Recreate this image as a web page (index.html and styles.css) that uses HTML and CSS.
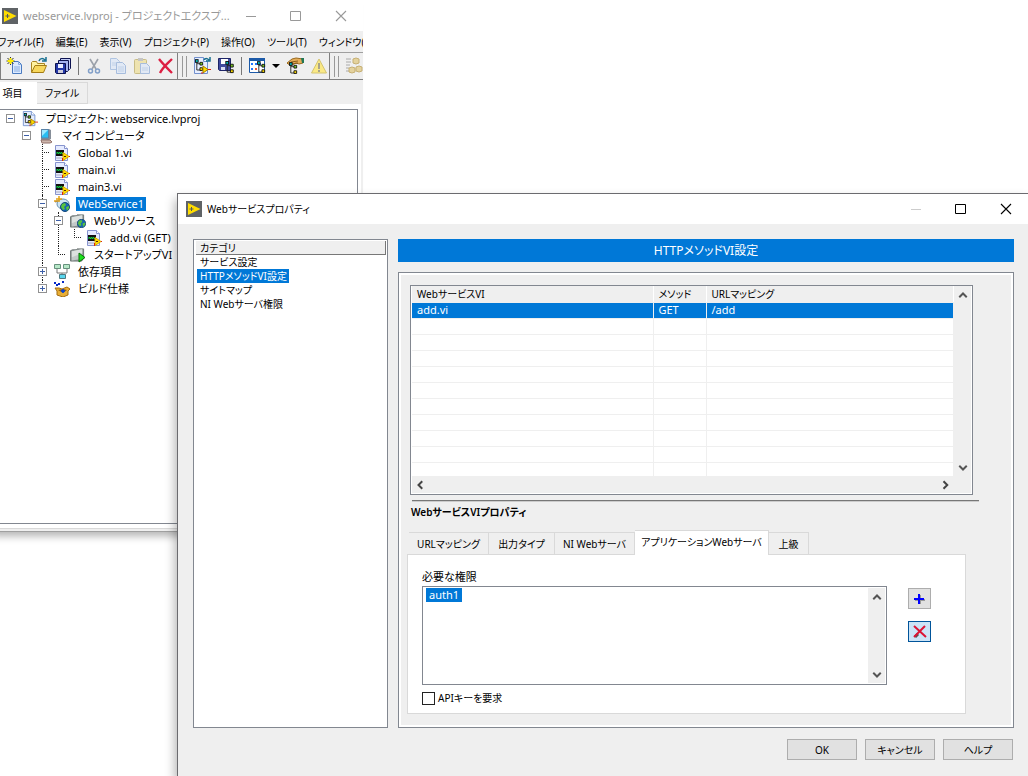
FILE: index.html
```html
<!DOCTYPE html>
<html lang="ja">
<head>
<meta charset="utf-8">
<title>Webサービスプロパティ</title>
<link rel="stylesheet" href="styles.css">
</head>
<body>
<svg class="defs" aria-hidden="true">
  <symbol id="i-app" viewBox="0 0 16 16"><rect width="16" height="16" fill="#5f6366"/><path d="M2 2L14.500 8L2 14Z" fill="#fd0"/><path d="M3.500 8h4M5.500 6v4" stroke="#54595c"/></symbol>
  <symbol id="i-new" viewBox="0 0 18 18"><path d="M6.500 4.500h6l3 3v9h-9z" fill="#dceaff" stroke="#4a7bc0"/><path d="M12.500 4.500v3h3M8 10h6M8 12h6M8 14h6" fill="none" stroke="#86acdf"/><path d="M4.500 0v8M.500 4h8M1.500 1l6 6M7.500 1l-6 6" stroke="#333"/><path d="M4.500 1v6M1.500 4h6" stroke="#fe0" stroke-width="2"/></symbol>
  <symbol id="i-open" viewBox="0 0 18 18"><path d="M1.500 15V5.500l1-1h4l1 2h7V9" fill="#fff3a0" stroke="#a98522"/><path d="M1.500 15.500L5 8.500h11.500l-3 7z" fill="#f6d75c" stroke="#a37c16"/><path d="M9 4c1-3 4-3 6-1M16 0v4h-4" fill="none" stroke="#176f90" stroke-width="1.500"/></symbol>
  <symbol id="i-saveall" viewBox="0 0 18 18"><path d="M6.500 1.500h10v10l-1 1h-9z" fill="#c3cdf6" stroke="#0c1250"/><path d="M4.500 3.500h10v10l-1 1h-9z" fill="#a5b3ef" stroke="#0c1250"/><path d="M1.500 6.500h10v10h-9l-1-1z" fill="#2438a8" stroke="#0c1250"/><path d="M4 7h5v4H4z" fill="#e8ecff"/><path d="M4 13h5v3H4z" fill="#ccd"/></symbol>
  <symbol id="i-cut" viewBox="0 0 18 18"><path d="M5 2l6 10M13 2L7 12" stroke="#9ba1aa" stroke-width="1.600"/><circle cx="5.500" cy="14" r="2" fill="none" stroke="#819fc8" stroke-width="1.500"/><circle cx="12.500" cy="14" r="2" fill="none" stroke="#819fc8" stroke-width="1.500"/></symbol>
  <symbol id="i-copy" viewBox="0 0 18 18"><path d="M1.500 1.500h6l3 3v8h-9z" fill="#e1e9f5" stroke="#b0c5e2"/><path d="M7.500 5.500h6l3 3v8h-9z" fill="#e1e9f5" stroke="#a7bddd"/><path d="M9 10h6M9 12h6M9 14h6M3 6h4M3 8h4" stroke="#c0d1e8"/></symbol>
  <symbol id="i-paste" viewBox="0 0 18 18"><rect x="1.500" y="2.500" width="12" height="14" rx="1" fill="#eee3b0" stroke="#c9bd86"/><path d="M5 1h5v3H5z" fill="#c5c5c5"/><path d="M7.500 6.500h6l3 3v7h-9z" fill="#e1e9f5" stroke="#a7bddd"/><path d="M9 11h6M9 13h6" stroke="#c0d1e8"/></symbol>
  <symbol id="i-del" viewBox="0 0 18 18"><path d="M2 2c4 5 7 8 13 14M15 2C10 7 6 10 3 16" fill="none" stroke="#dc1f42" stroke-width="2.400"/></symbol>
  <symbol id="i-tree" viewBox="0 0 10 14"><path d="M2 1v11h5M2 5h5" fill="none" stroke="#222"/><rect x=".5" y=".5" width="3" height="3" fill="#0bb" stroke="#111"/><path d="M5.500 3.500h3v3h-3z" fill="#7c2" stroke="#111"/><path d="M5.500 9.500h3v3h-3z" fill="#fd0" stroke="#111"/></symbol>
  <symbol id="i-pageTree" viewBox="0 0 18 18"><path d="M1.500.500h9l4 4v12h-13z" fill="#e6eeff" stroke="#7290cd"/><path d="M10.500.500v4h4" fill="#fff" stroke="#7290cd"/><use href="#i-tree" x="2" y="2" width="9" height="13"/><path d="M10 9l5 3.500L10 16z" fill="#fd0" stroke="#a98100"/><path d="M15 12.500h3M9 17v-2" stroke="#d21"/></symbol>
  <symbol id="i-pageTreeAdd" viewBox="0 0 18 18"><use href="#i-pageTree" width="18" height="18"/><path d="M11 3c1-2 3-2 5 0M17 0v4h-4" fill="none" stroke="#176f90" stroke-width="1.500"/></symbol>
  <symbol id="i-saveTree" viewBox="0 0 18 18"><path d="M1.500 1.500h12v12h-11l-1-1z" fill="#414b9f" stroke="#1d2466"/><path d="M4 2h7v5H4z" fill="#fff"/><path d="M4 10h4v3H4z" fill="#d9dcf2"/><use href="#i-tree" x="8" y="4" width="10" height="13"/></symbol>
  <symbol id="i-grid" viewBox="0 0 18 18"><path d="M1.500 1.500h15v14h-15z" fill="#fff" stroke="#1c5aa8"/><path d="M1 1h16v3H1z" fill="#1c5aa8"/><path d="M3 6h2v2H3zm4 0h2v2H7zm4 0h2v2h-2z" fill="#27f"/><path d="M3 11h2v2H3z" fill="#27f"/><path d="M7 11h2v2H7z" fill="#e53"/><use href="#i-tree" x="9" y="4" width="9" height="13"/></symbol>
  <symbol id="i-hand" viewBox="0 0 18 18"><path d="M1 6l5-4 4-1 7 1v4l-4 1-3-1-4 2-4-1z" fill="#e4ad58" stroke="#9a6a20"/><path d="M5 5l7-1M6 7l6-1" stroke="#8b5d1b"/><path d="M15 1h3v5h-2z" fill="#275"/><use href="#i-tree" x="3" y="5" width="9" height="13"/></symbol>
  <symbol id="i-warn" viewBox="0 0 18 18"><path d="M9 2l7.500 14h-15z" fill="#fae985" stroke="#d4c470"/><path d="M9 6v6M9 13v2" stroke="#8c8c8c" stroke-width="1.500"/></symbol>
  <symbol id="i-build" viewBox="0 0 18 18"><path d="M1 2h5M1 5h5M1 8h4M1 11h3M1 14h3" stroke="#aaa"/><g fill="#e4d29d" stroke="#c6af73"><path d="M8 2l3-1 3 1v4l-3 1-3-1z"/><path d="M4 11l3-1 3 1v4l-3 1-3-1z"/><path d="M11 10l3-1 3 1v4l-3 1-3-1z"/></g></symbol>
  <symbol id="i-pc" viewBox="0 0 16 16"><path d="M3 1h8l2 1v9l-2 1H3z" fill="#868e99"/><path d="M3.500 1.500h7v8.500h-7z" fill="#28bdf2" stroke="#5a83a8"/><path d="M4 2h6L4 8z" fill="#9ee8ff"/><path d="M3 12h9l2 2-2 1H4z" fill="#cdb6ac" stroke="#92736c"/></symbol>
  <symbol id="i-vi" viewBox="0 0 16 16"><path d="M1.500.500h9l3 3v12h-12z" fill="#e5ebff" stroke="#8794cf"/><path d="M10.500.500v3h3" fill="#fff" stroke="#8794cf"/><rect x="2" y="5" width="8" height="6" fill="#111"/><path d="M3 9V7l2 2V7l2 2V7l2 2" fill="none" stroke="#1c4"/><path d="M2 13h6" stroke="#aab"/><path d="M9 7.500l6 4L9 15.500z" fill="#fd0" stroke="#d9ab00"/><path d="M10 11.500h2" stroke="#520"/><path d="M8.500 16v-3M15 11.500h1" stroke="#d21"/></symbol>
  <symbol id="i-globe" viewBox="0 0 10 10"><circle cx="5" cy="5" r="4.500" fill="#1764b5" stroke="#124778"/><path d="M2 2l3-1 1 2-2 2 1 2-2 1-2-3zM6 5l3-1v2L7 9z" fill="#58c43c"/></symbol>
  <symbol id="i-web" viewBox="0 0 16 16"><path d="M1 6c3-2 8-1 11 2" fill="none" stroke="#668" stroke-width="1.500"/><ellipse cx="9" cy="8" rx="6" ry="5" fill="#cfe5f5" stroke="#6591b0"/><use href="#i-globe" x="6" y="6" width="10" height="10"/><path d="M5 0v6M2 3h6M0 5h4" stroke="#e5a315" stroke-width="1.500"/></symbol>
  <symbol id="i-folder" viewBox="0 0 16 16"><path d="M.500 4l2-1h4l1-1h7v10l-2 3H.500z" fill="#959d9c" stroke="#6c7473"/><path d="M2 4.500l11-2v10l-11 2z" fill="#c2c9c8"/><path d="M2 4.500l11-2v4L2 11z" fill="#dce1df"/></symbol>
  <symbol id="i-folderWeb" viewBox="0 0 16 16"><use href="#i-folder" width="15" height="15"/><use href="#i-globe" x="7" y="6" width="9" height="9"/></symbol>
  <symbol id="i-folderRun" viewBox="0 0 16 16"><use href="#i-folder" width="15" height="15"/><path d="M9 6l6 4.500L9 15z" fill="#1ee01e" stroke="#087008"/></symbol>
  <symbol id="i-dep" viewBox="0 0 16 16"><path d="M3 5v4h5v3M13 5v4H8" fill="none" stroke="#777"/><path d="M.500.500h6v4h-6zM9.500.500h6v4h-6z" fill="#b7e8c8" stroke="#67917d"/><path d="M5.500 10.500h6v4h-6z" fill="#58d5ed" stroke="#4c7880"/></symbol>
  <symbol id="i-spec" viewBox="0 0 16 16"><path d="M1 7l4 0 3 1 5-2 3 2-2 2v4l-5 2-6-2v-4z" fill="#e8ae35" stroke="#a36c13"/><path d="M4 9l5-1 4 1-4 3z" fill="#8a5712"/><path d="M9 8v4M7 10h4" stroke="#04d" stroke-width="1.500"/><path d="M0 1h2v2H0zM4 2h2v2H4zM8 0h2v2H8zM2 3h2v2H2z" fill="#0528c8"/></symbol>
  <symbol id="i-min" viewBox="0 0 12 12"><path d="M1 6.500h10" stroke="currentColor"/></symbol>
  <symbol id="i-max" viewBox="0 0 12 12"><path d="M.500 1.500h10v9H.500z" fill="none" stroke="currentColor"/></symbol>
  <symbol id="i-close" viewBox="0 0 12 12"><path d="M1 1l10 10M11 1L1 11" stroke="currentColor" stroke-width="1.100"/></symbol>
  <symbol id="i-up" viewBox="0 0 8 8"><path d="M1 5l3-3 3 3" fill="none" stroke="#555" stroke-width="1.600"/></symbol>
  <symbol id="i-down" viewBox="0 0 8 8"><path d="M1 3l3 3 3-3" fill="none" stroke="#555" stroke-width="1.600"/></symbol>
  <symbol id="i-left" viewBox="0 0 8 8"><path d="M5 1L2 4l3 3" fill="none" stroke="#444" stroke-width="1.600"/></symbol>
  <symbol id="i-right" viewBox="0 0 8 8"><path d="M2 1l3 3-3 3" fill="none" stroke="#444" stroke-width="1.600"/></symbol>
</svg>

<section class="window project" aria-label="プロジェクトエクスプローラ">
  <header class="titlebar inactive">
    <svg class="icon16"><use href="#i-app"/></svg>
    <h1 class="title">webservice.lvproj - プロジェクトエクスプ...</h1>
    <div class="controls">
      <button aria-label="最小化"><svg><use href="#i-min"/></svg></button>
      <button aria-label="最大化"><svg><use href="#i-max"/></svg></button>
      <button aria-label="閉じる"><svg><use href="#i-close"/></svg></button>
    </div>
  </header>
  <nav class="menubar">
    <button>ファイル(F)</button><button>編集(E)</button><button>表示(V)</button><button>プロジェクト(P)</button><button>操作(O)</button><button>ツール(T)</button><button>ウィンドウ(W)</button>
  </nav>
  <div class="toolbar">
    <div class="group first">
      <button aria-label="新規"><svg><use href="#i-new"/></svg></button>
      <button aria-label="開く"><svg><use href="#i-open"/></svg></button>
      <button aria-label="すべて保存"><svg><use href="#i-saveall"/></svg></button>
      <i class="divider"></i>
      <button aria-label="切り取り"><svg><use href="#i-cut"/></svg></button>
      <button aria-label="コピー"><svg><use href="#i-copy"/></svg></button>
      <button aria-label="貼り付け"><svg><use href="#i-paste"/></svg></button>
      <button aria-label="削除"><svg><use href="#i-del"/></svg></button>
    </div>
    <div class="group second">
      <i class="grip"></i>
      <button aria-label="プロジェクトを追加"><svg><use href="#i-pageTreeAdd"/></svg></button>
      <button aria-label="プロジェクトを保存"><svg><use href="#i-saveTree"/></svg></button>
      <i class="divider"></i>
      <button aria-label="フィルタ"><svg><use href="#i-grid"/></svg></button>
      <i class="caret"></i>
      <button aria-label="項目を解決"><svg><use href="#i-hand"/></svg></button>
      <button aria-label="競合"><svg><use href="#i-warn"/></svg></button>
    </div>
    <div class="group third">
      <i class="grip"></i>
      <button aria-label="ビルド"><svg><use href="#i-build"/></svg></button>
    </div>
  </div>
  <div class="ptabs" role="tablist">
    <button role="tab" aria-selected="true">項目</button><button role="tab" aria-selected="false">ファイル</button>
  </div>
  <div class="treewrap">
    <ul class="tree">
      <li><div class="node"><button class="toggle" aria-label="折りたたむ"></button><svg class="nicon"><use href="#i-pageTree"/></svg><span>プロジェクト: webservice.lvproj</span></div>
        <ul>
          <li><div class="node"><button class="toggle" aria-label="折りたたむ"></button><svg class="nicon"><use href="#i-pc"/></svg><span>マイ コンピュータ</span></div>
            <ul class="guided">
              <li><div class="node"><i class="stub"></i><svg class="nicon"><use href="#i-vi"/></svg><span>Global 1.vi</span></div></li>
              <li><div class="node"><i class="stub"></i><svg class="nicon"><use href="#i-vi"/></svg><span>main.vi</span></div></li>
              <li><div class="node"><i class="stub"></i><svg class="nicon"><use href="#i-vi"/></svg><span>main3.vi</span></div></li>
              <li><div class="node"><button class="toggle" aria-label="折りたたむ"></button><svg class="nicon"><use href="#i-web"/></svg><span class="selected">WebService1</span></div>
                <ul class="guided">
                  <li><div class="node"><button class="toggle" aria-label="折りたたむ"></button><svg class="nicon"><use href="#i-folderWeb"/></svg><span>Webリソース</span></div>
                    <ul class="guided">
                      <li><div class="node"><i class="stub"></i><svg class="nicon"><use href="#i-vi"/></svg><span>add.vi (GET)</span></div></li>
                    </ul>
                  </li>
                  <li><div class="node"><i class="stub"></i><svg class="nicon"><use href="#i-folderRun"/></svg><span>スタートアップVI</span></div></li>
                </ul>
              </li>
              <li><div class="node"><button class="toggle plus" aria-label="展開する"></button><svg class="nicon"><use href="#i-dep"/></svg><span>依存項目</span></div></li>
              <li><div class="node"><button class="toggle plus" aria-label="展開する"></button><svg class="nicon"><use href="#i-spec"/></svg><span>ビルド仕様</span></div></li>
            </ul>
          </li>
        </ul>
      </li>
    </ul>
  </div>
</section>

<section class="window dialog" role="dialog" aria-labelledby="dlg-title">
  <header class="titlebar">
    <svg class="icon16"><use href="#i-app"/></svg>
    <h1 class="title" id="dlg-title">Webサービスプロパティ</h1>
    <div class="controls">
      <button class="off" aria-label="最小化"><svg><use href="#i-min"/></svg></button>
      <button aria-label="最大化"><svg><use href="#i-max"/></svg></button>
      <button aria-label="閉じる"><svg><use href="#i-close"/></svg></button>
    </div>
  </header>
  <div class="dialog-body">
    <nav class="categories">
      <h2>カテゴリ</h2>
      <ul>
        <li><button>サービス設定</button></li>
        <li><button class="selected">HTTPメソッドVI設定</button></li>
        <li><button>サイトマップ</button></li>
        <li><button>NI Webサーバ権限</button></li>
      </ul>
    </nav>
    <main class="settings">
      <h2 class="banner">HTTPメソッドVI設定</h2>
      <div class="panel">
        <div class="grid">
          <table>
            <colgroup><col class="c-vi"><col class="c-method"><col></colgroup>
            <thead><tr><th>WebサービスVI</th><th>メソッド</th><th>URLマッピング</th></tr></thead>
            <tbody>
              <tr class="selected"><td>add.vi</td><td>GET</td><td>/add</td></tr>
              <tr><td></td><td></td><td></td></tr>
              <tr><td></td><td></td><td></td></tr>
              <tr><td></td><td></td><td></td></tr>
              <tr><td></td><td></td><td></td></tr>
              <tr><td></td><td></td><td></td></tr>
              <tr><td></td><td></td><td></td></tr>
              <tr><td></td><td></td><td></td></tr>
              <tr><td></td><td></td><td></td></tr>
              <tr><td></td><td></td><td></td></tr>
              <tr><td></td><td></td><td></td></tr>
            </tbody>
          </table>
          <div class="vscroll"><button aria-label="上へ"><svg><use href="#i-up"/></svg></button><button aria-label="下へ"><svg><use href="#i-down"/></svg></button></div>
          <div class="hscroll"><button aria-label="左へ"><svg><use href="#i-left"/></svg></button><button aria-label="右へ"><svg><use href="#i-right"/></svg></button></div>
        </div>
        <hr>
        <h3>WebサービスVIプロパティ</h3>
        <div class="tabs" role="tablist">
          <button role="tab" class="w80">URLマッピング</button><button role="tab" class="w66">出力タイプ</button><button role="tab" class="w80">NI Webサーバ</button><button role="tab" class="w134" aria-selected="true">アプリケーションWebサーバ</button><button role="tab" class="w40">上級</button>
        </div>
        <div class="tabpanel" role="tabpanel">
          <h4>必要な権限</h4>
          <div class="perm">
            <div class="listbox">
              <ul><li class="selected">auth1</li></ul>
              <div class="vscroll"><button aria-label="上へ"><svg><use href="#i-up"/></svg></button><button aria-label="下へ"><svg><use href="#i-down"/></svg></button></div>
            </div>
            <div class="actions">
              <button aria-label="追加"><svg viewBox="0 0 14 14"><path d="M7 3v9M2 8h10" stroke="#999" stroke-width="2"/><path d="M6 2v10M1 7h10" stroke="#00f" stroke-width="2"/></svg></button>
              <button class="hot" aria-label="削除"><svg viewBox="0 0 14 14"><path d="M2 12l3-3" stroke="#555" stroke-width="3"/><path d="M1 1l12 11M12 1L1 12" stroke="#dc1435" stroke-width="2"/></svg></button>
            </div>
          </div>
          <label class="check"><input type="checkbox">APIキーを要求</label>
        </div>
      </div>
    </main>
  </div>
  <footer class="dialog-footer"><button>OK</button><button>キャンセル</button><button>ヘルプ</button></footer>
</section>
</body>
</html>
```

FILE: styles.css
```css
* { box-sizing: border-box; }

body {
  margin: 0;
  min-height: 100vh;
  overflow: hidden;
  background: #fff;
  color: #000;
  font: 11px/14px "Noto Sans", "Noto Sans CJK JP", sans-serif;
  font-feature-settings: "palt";
}

button {
  margin: 0;
  padding: 0;
  border: 0;
  background: none;
  color: inherit;
  font: inherit;
  font-feature-settings: inherit;
  white-space: nowrap;
}

h1, h2, h3, h4 { margin: 0; font: inherit; }
ul { margin: 0; padding: 0; list-style: none; }
svg { display: block; flex: none; }
.defs { display: none; }
.icon16 { width: 16px; height: 16px; }

/* Windows on the desktop */
.window { position: absolute; display: flex; flex-direction: column; background: #efefef; }

.project {
  top: 0;
  left: 0;
  width: 363px;
  height: 532px;
  overflow: hidden;
  border-bottom: 1px solid #a0a0a0;
  box-shadow: -8px 4px 8px rgba(0, 0, 0, .3);
}

.dialog {
  top: 193px;
  right: 0;
  bottom: 0;
  left: 177px;
  border: solid #6b6b6f;
  border-width: 1px 0 0 1px;
  box-shadow: -2px 6px 10px rgba(0, 0, 0, .3);
}

.titlebar {
  display: flex;
  align-items: center;
  flex: none;
  height: 30px;
  padding-left: 8px;
  gap: 5px;
  background: #fff;
}

.titlebar.inactive { height: 31px; padding-left: 2px; color: #999; }
.title { flex: 1; min-width: 0; white-space: nowrap; }
.dialog .title { font-size: 10px; }
.controls { display: flex; flex: none; }
.controls button { display: grid; place-items: center; width: 45px; height: 30px; }
.controls svg { width: 12px; height: 12px; }
.controls .off { color: #ccc; }

/* Project explorer */
.menubar {
  display: flex;
  flex: none;
  gap: 12px;
  height: 22px;
  overflow: hidden;
  border-bottom: 1px solid #a0a0a0;
  font-size: 10px;
}

.menubar button { flex: none; }
.menubar button:first-child { margin-left: -2px; }

.toolbar { display: flex; flex: none; height: 27px; border-bottom: 1px solid #808080; overflow: hidden; }
.group { display: flex; align-items: center; flex: none; gap: 6px; }
.group svg { width: 18px; height: 18px; }
.group.first { width: 178px; padding-left: 5px; border: solid #808080; border-width: 0 1px; }
.group.second { width: 152px; padding-left: 4px; border-right: 1px solid #808080; }
.group.third { padding-left: 4px; }
.divider { flex: none; width: 1px; height: 18px; background: #777; }
.grip { flex: none; width: 5px; height: 21px; border: solid #999; border-width: 0 1px; }
.caret { flex: none; border: 4px solid transparent; border-top-color: #000; border-bottom: 0; }

.ptabs { display: flex; flex: none; height: 24px; padding-top: 2px; }
.ptabs button { width: 51px; border: 1px solid #d9d9d9; border-left: 0; font-size: 10px; }
.ptabs button:first-child { width: 37px; padding-right: 12px; border: 0; background: #fff; }

.treewrap { flex: 1; margin: 0 2px 2px 0; padding: 5px 3px 4px 0; background: #fff; border-bottom: 1px solid #d9d9d9; }
.tree { height: 100%; padding-left: 6px; border: 1px solid #828790; border-left: 0; }
.tree ul { padding-left: 16px; }
.tree li { position: relative; }

.node { display: flex; align-items: center; height: 17px; }
.node span { margin-left: 6px; padding: 0 2px; white-space: nowrap; }
.node .selected, .selected { background: #0078d7; color: #fff; }
.nicon { width: 16px; height: 16px; }

.toggle {
  position: relative;
  flex: none;
  width: 9px;
  height: 9px;
  margin-right: 7px;
  border: 1px solid #919191;
  background: linear-gradient(#3d5fa8, #3d5fa8) center / 5px 1px no-repeat #fff;
}

.toggle.plus {
  background:
    linear-gradient(#3d5fa8, #3d5fa8) center / 5px 1px no-repeat,
    linear-gradient(#3d5fa8, #3d5fa8) center / 1px 5px no-repeat #fff;
}

.stub { width: 7px; margin: 0 5px 0 4px; border-top: 1px dotted #222; }
.guided > li::before {
  content: "";
  position: absolute;
  top: 0;
  bottom: 0;
  left: 4px;
  border-left: 1px dotted #222;
}
.guided > li:last-child::before { bottom: auto; height: 9px; }

/* Properties dialog */
.dialog-body { display: flex; flex: 1; gap: 10px; min-height: 0; padding: 15px 14px 0 15px; }

.categories { flex: none; width: 195px; padding: 1px; border: 1px solid #828790; background: #fff; font-size: 10px; }
.categories h2 {
  height: 14px;
  margin-left: 1px;
  padding-left: 4px;
  border: solid #777;
  border-width: 0 1px 1px 0;
  background: #efefef;
}
.categories li { display: flex; }
.categories li button { margin-left: 2px; padding: 0 2px 0 3px; }

.settings { display: flex; flex: 1; flex-direction: column; gap: 10px; min-width: 0; }
.banner { height: 23px; background: #0078d7; color: #fff; font-size: 12px; line-height: 23px; text-align: center; }

.panel {
  flex: 1;
  padding: 10px 39px 10px 8px;
  border: 1px solid #828790;
  outline: 2px solid #fff;
  outline-offset: -3px;
}

.grid {
  display: grid;
  grid-template-columns: 1fr 17px;
  margin: 2px 1px 0 3px;
  border: 1px solid #828790;
  padding: 0 1px 1px;
  background: #fff;
}

table { width: 100%; border-collapse: collapse; table-layout: fixed; }
.c-vi { width: 241px; }
.c-method { width: 53px; }
th, td { height: 16px; padding: 0 5px; line-height: 14px; text-align: left; font-weight: normal; border: solid #efefef; border-width: 0 1px 1px 0; white-space: nowrap; }
th { background: #efefef; border-right-color: #fff; font-size: 10px; }
tr:last-child td { height: 14px; border-bottom: 0; }

.vscroll { display: flex; flex-direction: column; justify-content: space-between; align-items: center; width: 17px; padding: 5px 0 4px; background: #efefef; }
.hscroll { display: flex; grid-column: 1 / -1; justify-content: space-between; align-items: center; height: 17px; padding: 0 20px 0 4px; background: #efefef; }
.vscroll svg, .hscroll svg { width: 10px; height: 10px; }

hr { margin: 5px -5px 0 5px; border: solid #777; border-width: 1px 0 0; box-shadow: 0 1px #ccc; }
h3 { padding: 4px 4px 11px; font-size: 10px; font-weight: 600; }

.tabs { display: flex; align-items: flex-end; height: 24px; padding-left: 2px; font-size: 10px; }
.tabs button { height: 22px; border: 1px solid #d9d9d9; border-width: 1px 1px 0 0; }
.tabs [aria-selected] { height: 25px; margin-bottom: -1px; padding-bottom: 2px; background: #fff; }
.w40 { width: 40px; }
.w66 { width: 66px; }
.w80 { width: 80px; }
.w134 { width: 134px; }

.tabpanel { padding: 15px 34px 8px 14px; border: 1px solid #d9d9d9; background: #fff; }
.tabs, .tabpanel { margin-right: 8px; }
.perm { display: flex; gap: 21px; margin-top: 2px; }
.listbox { display: flex; flex: 1; justify-content: space-between; height: 99px; padding: 1px; border: 1px solid #828790; }
.listbox li { margin-left: 2px; padding: 0 3px; }
.actions { display: flex; flex: none; flex-direction: column; gap: 12px; padding-top: 2px; }
.actions button { display: grid; place-items: center; width: 23px; height: 21px; border: 1px solid #adadad; background: #e1e1e1; }
.actions .hot { border-color: #00549a; background: #cce4f7; }
.actions svg { width: 14px; height: 14px; }
.check { display: flex; align-items: center; gap: 3px; margin-top: 6px; font-size: 10px; }
.check input { appearance: none; width: 13px; height: 13px; margin: 0; border: 1px solid #222; background: #fff; }

.dialog-footer { display: flex; flex: none; justify-content: flex-end; gap: 8px; padding: 11px 15px 16px; font-size: 10px; }
.dialog-footer button { width: 70px; height: 21px; border: 1px solid #adadad; background: #e1e1e1; }
```
